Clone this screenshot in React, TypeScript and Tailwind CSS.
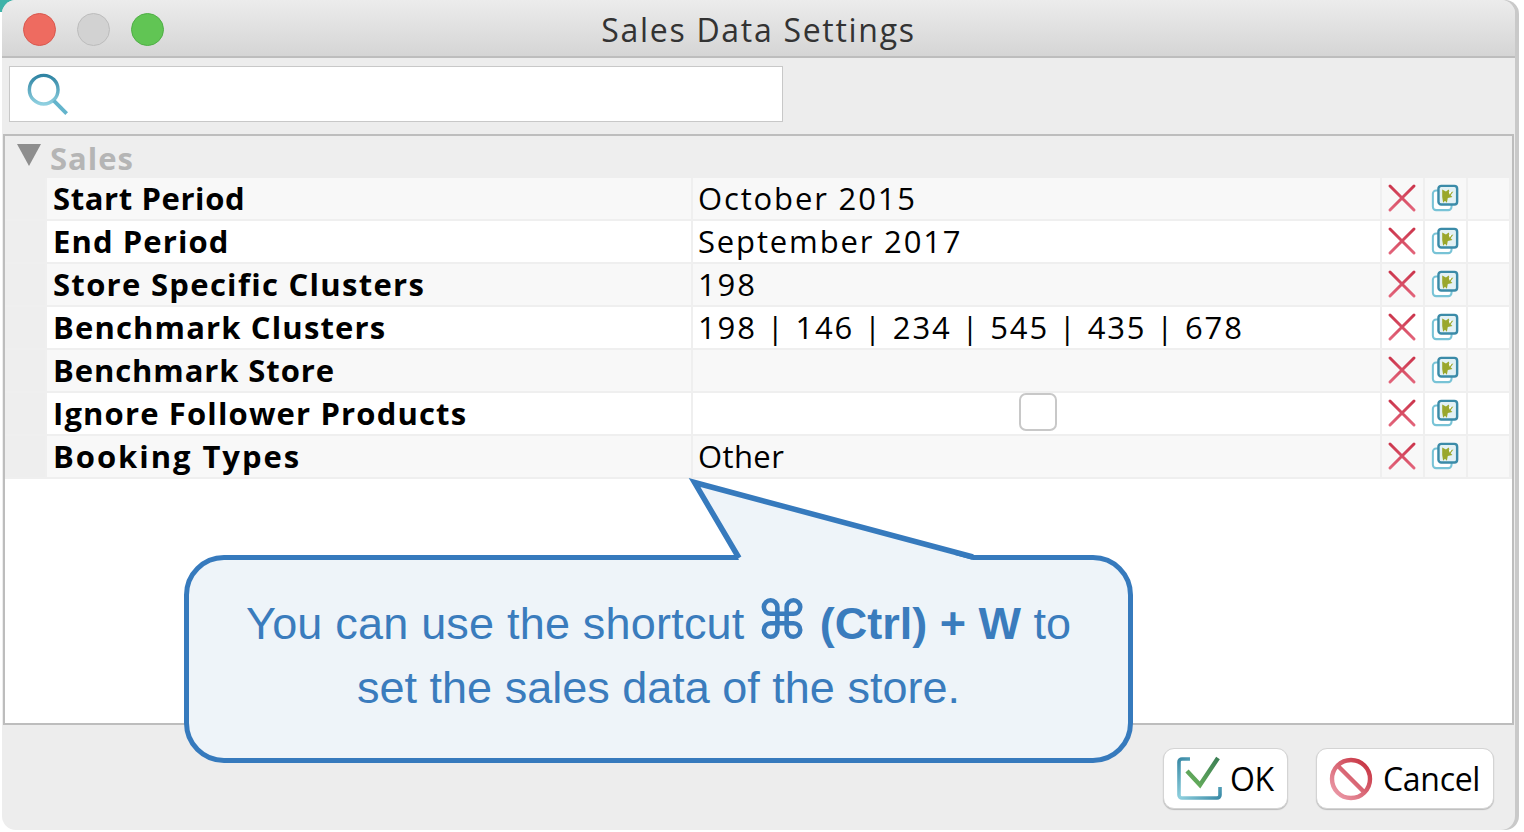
const rows = [
  { label: 'Start Period', value: 'October 2015', labelTracking: 'tracking-[0.6px]' },
  { label: 'End Period', value: 'September 2017', labelTracking: 'tracking-[1.1px]' },
  { label: 'Store Specific Clusters', value: '198', labelTracking: 'tracking-[1.3px]' },
  { label: 'Benchmark Clusters', value: '198 | 146 | 234 | 545 | 435 | 678', labelTracking: 'tracking-[1.15px]' },
  { label: 'Benchmark Store', value: '', labelTracking: 'tracking-[0.9px]' },
  { label: 'Ignore Follower Products', value: '', checkbox: true, labelTracking: 'tracking-[1.15px]' },
  { label: 'Booking Types', value: 'Other', tight: true, labelTracking: 'tracking-[1.95px]' },
]

function SearchIcon() {
  return (
    <svg width="44" height="44" viewBox="0 0 46 46" fill="none">
      <defs>
        <linearGradient id="search" x1="0" y1="0" x2="0" y2="1">
          <stop offset="0" stopColor="#2f84a3" />
          <stop offset="1" stopColor="#8fd0e0" />
        </linearGradient>
      </defs>
      <circle cx="18.5" cy="18.5" r="15" stroke="url(#search)" strokeWidth="3.6" />
      <path d="M29 30l13.5 13.5" stroke="#63b4cc" strokeWidth="4" />
    </svg>
  )
}

function CrossIcon() {
  return (
    <svg width="30" height="30" viewBox="0 0 30 30" fill="none">
      <defs>
        <linearGradient id="cross" x1="0" y1="0" x2="0" y2="30" gradientUnits="userSpaceOnUse">
          <stop offset="0" stopColor="#c93047" />
          <stop offset="1" stopColor="#e56a80" />
        </linearGradient>
      </defs>
      <path d="M3 3l24 24M27 3L3 27" stroke="url(#cross)" strokeWidth="3" strokeLinecap="round" />
    </svg>
  )
}

function CopyIcon() {
  return (
    <svg width="28" height="28" viewBox="0 0 30 30" fill="none">
      <rect x="2" y="7" width="20" height="21" rx="3.5" fill="#fff" stroke="#78c3d6" strokeWidth="2.2" />
      <rect x="8" y="2" width="20" height="20" rx="3" fill="#e3f1f4" stroke="#3b8ba8" strokeWidth="2.6" />
      <path d="M12 6l4 2 3-2 1 3 4-1-3 4 2 2-5 1-1 5-2-2-2 2-1-6z" fill="#9aa72c" />
      <path d="M19 8l3 .5-2 3z" fill="#fff" />
    </svg>
  )
}

function OkIcon() {
  return (
    <svg width="46" height="46" viewBox="0 0 46 46" fill="none">
      <defs>
        <linearGradient id="okbox" x1="0" y1="0" x2="1" y2="1">
          <stop offset="0" stopColor="#3a8aa6" />
          <stop offset="0.5" stopColor="#8fd0de" />
          <stop offset="1" stopColor="#3a8aa6" />
        </linearGradient>
        <linearGradient id="okcheck" x1="0" y1="1" x2="1" y2="0">
          <stop offset="0" stopColor="#6bb35c" />
          <stop offset="1" stopColor="#3c7f55" />
        </linearGradient>
      </defs>
      <path d="M14 3H6a3 3 0 0 0-3 3v33a3 3 0 0 0 3 3h35a3 3 0 0 0 3-3v-8" stroke="url(#okbox)" strokeWidth="3.6" />
      <path d="M11 15l13 14L42 2" stroke="url(#okcheck)" strokeWidth="4.4" />
    </svg>
  )
}

function CancelIcon() {
  return (
    <svg width="44" height="44" viewBox="0 0 44 44" fill="none">
      <defs>
        <linearGradient id="cancel" x1="1" y1="0" x2="0" y2="1">
          <stop offset="0" stopColor="#c42c3a" />
          <stop offset="1" stopColor="#eea2b0" />
        </linearGradient>
      </defs>
      <circle cx="22" cy="22" r="19" stroke="url(#cancel)" strokeWidth="4.4" />
      <path d="M8.5 8.5l27 27" stroke="url(#cancel)" strokeWidth="4.4" />
    </svg>
  )
}

export default function App() {
  return (
    <div className="relative h-[832px] w-[1524px] overflow-hidden bg-white font-['Open_Sans',sans-serif] text-black">
      {/* Desktop peeking past the window corner */}
      <div className="absolute left-0 top-0 h-[12px] w-[14px] bg-[#3fb3a9]" />

      <div className="relative ml-[2px] flex h-[830px] w-[1513px] flex-col overflow-hidden rounded-[14px] bg-[#ededed] shadow-[4px_0_0_#c9c9c9]">
        {/* Title bar */}
        <div className="relative flex h-[58px] shrink-0 items-center justify-center border-b-2 border-[#bdbdbd] bg-gradient-to-b from-[#ececec] to-[#d5d5d5]">
          <div className="absolute left-[21px] top-[13px] flex gap-[21px]">
            <div className="h-[33px] w-[33px] rounded-full border border-[#d8584e] bg-[#ee6b60]" />
            <div className="h-[33px] w-[33px] rounded-full border border-[#bcbcbc] bg-[#d2d2d2]" />
            <div className="h-[33px] w-[33px] rounded-full border border-[#4fae46] bg-[#61c554]" />
          </div>
          <span className="mt-[4px] text-[32px] leading-none tracking-[1.7px] text-[#333]">Sales Data Settings</span>
        </div>

        {/* Search */}
        <div className="flex h-[76px] shrink-0 items-start pl-[7px] pt-[8px]">
          <div className="flex h-[56px] w-[774px] items-center border border-[#c8c8c8] bg-white pl-[16px]">
            <SearchIcon />
          </div>
        </div>

        {/* Table panel */}
        <div className="mx-[1px] flex h-[591px] shrink-0 flex-col border-2 border-[#bdbdbd] bg-white">
          <div className="flex h-[42px] shrink-0 items-center bg-[#eeeeee] pl-[12px]">
            <svg width="24" height="22" viewBox="0 0 24 22" className="mb-[4px]">
              <path d="M0 0h24L12 22z" fill="#8e8e8e" />
            </svg>
            <span className="ml-[9px] mt-[3px] text-[31px] font-bold leading-none tracking-[1px] text-[#b5b5b5]">Sales</span>
          </div>
          {rows.map((row, i) => {
            const cell = i % 2 === 0 ? 'bg-[#f8f8f8]' : 'bg-white'
            return (
              <div key={row.label} className="flex h-[43px] shrink-0 gap-[2px] border-b-2 border-[#efefef] bg-[#efefef]">
                <div className="w-[40px] shrink-0 bg-[#eeeeee]" />
                <div className={`flex w-[644px] shrink-0 items-center pl-[6px] text-[31px] font-bold leading-none ${row.labelTracking} ${cell}`}>
                  {row.label}
                </div>
                <div className={`relative flex w-[687px] shrink-0 items-center pl-[5px] text-[31px] leading-none ${row.tight ? 'tracking-[0.4px]' : 'tracking-[1.85px]'} ${cell}`}>
                  {row.value}
                  {row.checkbox && (
                    <div className="absolute left-[326px] top-0 h-[38px] w-[38px] rounded-[7px] border-2 border-[#c8c8c8] bg-white" />
                  )}
                </div>
                <div className={`flex w-[41px] shrink-0 items-center justify-center pb-[2px] pr-[1px] ${cell}`}>
                  <CrossIcon />
                </div>
                <div className={`flex w-[41px] shrink-0 items-center justify-center pb-[2px] pr-[2px] ${cell}`}>
                  <CopyIcon />
                </div>
                <div className={`w-[41px] shrink-0 ${cell}`} />
              </div>
            )
          })}
        </div>

        {/* Footer */}
        <div className="flex flex-1 items-start justify-end gap-[28px] pr-[21px] pt-[23px]">
          <button className="flex h-[61px] w-[125px] items-center gap-[8px] rounded-[11px] border border-[#d4d4d4] bg-white pl-[12px] text-[32px] leading-none tracking-[-0.5px] shadow-[0_1px_1px_#bbb]">
            <OkIcon />
            OK
          </button>
          <button className="flex h-[61px] w-[178px] items-center gap-[10px] rounded-[11px] border border-[#d4d4d4] bg-white pl-[12px] text-[32px] leading-none tracking-[-0.3px] shadow-[0_1px_1px_#bbb]">
            <CancelIcon />
            Cancel
          </button>
        </div>
      </div>

      {/* Callout */}
      <div className="absolute left-[184px] top-[555px] flex h-[208px] w-[949px] flex-col items-center justify-center rounded-[40px] border-[5px] border-[#367abd] bg-[#eef4f9] pb-[6px] font-['Liberation_Sans',sans-serif] text-[45px] leading-[64px] text-[#3a7cbd]">
        <p>
          <span className="tracking-[0.2px]">You can use the shortcut</span> <b className="font-['DejaVu_Sans',sans-serif] text-[54px] leading-none">⌘</b> <b>(Ctrl) + W</b> to
        </p>
        <p>set the sales data of the store.</p>
      </div>
      <svg className="absolute left-[680px] top-[470px]" width="310" height="95" viewBox="0 0 310 95" fill="none">
        <path d="M14.5 12.5L59 90H293z" fill="#eef4f9" />
        <path d="M59 88L14.5 12.5L293 87" stroke="#367abd" strokeWidth="5.5" />
      </svg>
    </div>
  )
}
